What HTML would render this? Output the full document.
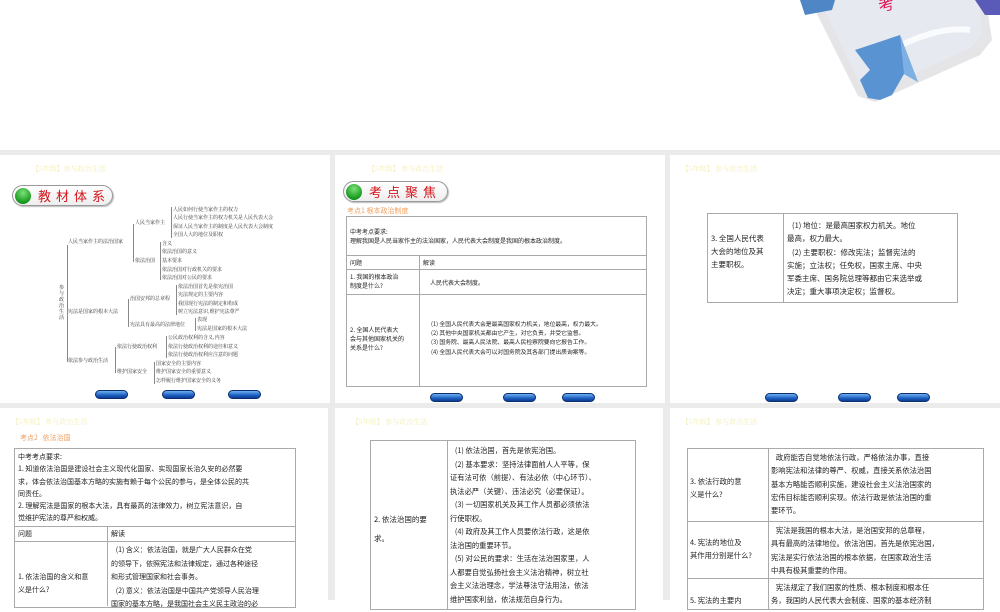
<!DOCTYPE html>
<html><head><meta charset="utf-8">
<style>
*{margin:0;padding:0;box-sizing:border-box}
body{width:1000px;height:600px;overflow:hidden;background:#fff;position:relative;font-family:"Liberation Serif","Noto Serif CJK SC","Noto Sans CJK SC",serif;color:#222}
.a{position:absolute;white-space:nowrap}
.bg{position:absolute;left:0;top:150px;width:1000px;height:450px;background:#ebebeb}
.s{position:absolute;background:#fff;overflow:hidden}
.hd{position:absolute;font-size:7px;color:#f3eeb8;white-space:nowrap}
.badge{position:absolute;height:21px;border:1px solid #999;border-radius:11px;background:linear-gradient(#fff,#eee);box-shadow:1px 1px 1px #bbb}
.badge .c{position:absolute;left:2px;top:2px;width:16px;height:16px;border-radius:50%;background:radial-gradient(circle at 50% 30%,#7de07a,#169a1e 70%,#0a6a10)}
.badge .t{position:absolute;left:25px;top:1px;font-size:13px;color:#d4141c;letter-spacing:5px;font-family:"Noto Sans CJK SC",sans-serif;line-height:18px;white-space:nowrap}
.btn{position:absolute;width:33px;height:9px;border-radius:5px;background:linear-gradient(#6fb0f0,#1c5fc0 60%,#0d3c90);border:1px solid #0b2e70}
.tb{position:absolute;border:1px solid #aaa}
.ln{position:absolute;background:#aaa}
.tx{position:absolute;font-family:"Noto Sans CJK SC",sans-serif;color:#222;white-space:nowrap}
.tr{font-size:5px;color:#333;position:absolute;white-space:nowrap;font-family:"Noto Serif CJK SC",serif;line-height:6px}
.br{position:absolute;border-left:1px solid #888}
.or{position:absolute;font-size:8px;color:#f0a060;white-space:nowrap;font-family:"Noto Sans CJK SC",sans-serif}
</style></head><body>

<!-- top decoration -->
<svg class="a" style="left:780px;top:0" width="220" height="110" viewBox="0 0 220 110">
 <path d="M20 -20 L200 -40 L212 40 L200 55 L95 102 L78 96 Z" fill="#d4d4d8" opacity=".6"/>
 <path d="M30 -20 L195 -40 L202 35 L190 48 L95 92 L82 88 Z" fill="#e6e9ef"/>
 <path d="M95 60 Q150 25 190 30" stroke="#fff" stroke-width="6" fill="none" opacity=".8"/>
 <path d="M75 50 L120 35 L138 82 L124 74 L112 95 L100 100 L88 98 L80 80 L90 70 Z" fill="#5a93d2"/>
 <path d="M120 35 L138 82 L124 74 Z" fill="#7fb0e4"/>
 <path d="M20 0 L55 0 L52 10 L25 15 Z" fill="#4f86c6"/>
 <path d="M195 0 L220 0 L220 15 L205 15 Z" fill="#5a5ab8"/>
 <text x="100" y="12" font-size="16" fill="#e0185a" font-family="Noto Sans CJK SC,sans-serif" transform="rotate(-15 100 12)">考</text>
</svg>

<div class="bg"></div>

<!-- Slide 1 -->
<div class="s" style="left:0;top:155px;width:330px;height:248px">
 <div class="hd" style="left:32px;top:9px">【5年级】参与政治生活</div>
 <div class="badge" style="left:12px;top:30px;width:101px"><div class="c"></div><div class="t">教材体系</div></div>
 <div class="btn" style="left:95px;top:235px"></div><div class="btn" style="left:162px;top:235px"></div><div class="btn" style="left:228px;top:235px"></div>
</div>
<div class="tr" style="left:59px;top:285px;width:6px;white-space:normal;line-height:6px">参与政治生活</div>
<div class="br" style="left:67px;top:245px;height:117px"></div>
<div class="tr" style="left:68px;top:239px">人民当家作主的法治国家</div>
<div class="tr" style="left:68px;top:309px">宪法是国家的根本大法</div>
<div class="tr" style="left:68px;top:358px">依法参与政治生活</div>
<div class="br" style="left:133px;top:224px;height:38px"></div>
<div class="tr" style="left:135px;top:220px">人民当家作主</div>
<div class="tr" style="left:135px;top:258px">依法治国</div>
<div class="br" style="left:171px;top:207px;height:31px"></div>
<div class="tr" style="left:173px;top:207px">人民如何行使当家作主的权力</div>
<div class="tr" style="left:173px;top:215px">人民行使当家作主的权力机关是人民代表大会</div>
<div class="tr" style="left:173px;top:224px">保证人民当家作主的制度是人民代表大会制度</div>
<div class="tr" style="left:173px;top:232px">全国人大的地位及职权</div>
<div class="br" style="left:160px;top:242px;height:38px"></div>
<div class="tr" style="left:162px;top:241px">含义</div>
<div class="tr" style="left:162px;top:249px">依法治国的意义</div>
<div class="tr" style="left:162px;top:258px">基本要求</div>
<div class="tr" style="left:162px;top:267px">依法治国对行政机关的要求</div>
<div class="tr" style="left:162px;top:275px">依法治国对公民的要求</div>
<div class="br" style="left:128px;top:299px;height:28px"></div>
<div class="tr" style="left:130px;top:296px">治国安邦的总章程</div>
<div class="tr" style="left:130px;top:322px">宪法具有最高的法律地位</div>
<div class="br" style="left:176px;top:285px;height:30px"></div>
<div class="tr" style="left:178px;top:284px">依法治国首先是依宪治国</div>
<div class="tr" style="left:178px;top:292px">宪法规定的主要内容</div>
<div class="tr" style="left:178px;top:301px">我国现行宪法的制定和构成</div>
<div class="tr" style="left:178px;top:309px">树立宪法意识,维护宪法尊严</div>
<div class="br" style="left:195px;top:318px;height:13px"></div>
<div class="tr" style="left:197px;top:317px">表现</div>
<div class="tr" style="left:197px;top:326px">宪法是国家的根本大法</div>
<div class="br" style="left:115px;top:347px;height:26px"></div>
<div class="tr" style="left:117px;top:344px">依法行使政治权利</div>
<div class="tr" style="left:117px;top:369px">维护国家安全</div>
<div class="br" style="left:166px;top:336px;height:22px"></div>
<div class="tr" style="left:168px;top:335px">公民政治权利的含义,内容</div>
<div class="tr" style="left:168px;top:344px">依法行使政治权利的途径和意义</div>
<div class="tr" style="left:168px;top:352px">依法行使政治权利应注意的问题</div>
<div class="br" style="left:154px;top:362px;height:22px"></div>
<div class="tr" style="left:156px;top:361px">国家安全的主要内容</div>
<div class="tr" style="left:156px;top:369px">维护国家安全的重要意义</div>
<div class="tr" style="left:156px;top:378px">怎样履行维护国家安全的义务</div>

<!-- Slide 2 -->
<div class="s" style="left:335px;top:155px;width:330px;height:248px">
 <div class="hd" style="left:33px;top:9px">【5年级】 参与政治生活</div>
 <div class="badge" style="left:8px;top:26px;width:105px"><div class="c"></div><div class="t">考点聚焦</div></div>
 <div class="btn" style="left:95px;top:238px"></div><div class="btn" style="left:168px;top:238px"></div><div class="btn" style="left:227px;top:238px"></div>
</div>
<div class="or" style="left:347px;top:206px;font-size:7px">考点1 根本政治制度</div>
<div class="tb" style="left:346px;top:216px;width:301px;height:171px"></div>
<div class="ln" style="left:346px;top:255px;width:301px;height:1px"></div>
<div class="ln" style="left:346px;top:269px;width:301px;height:1px"></div>
<div class="ln" style="left:346px;top:294px;width:301px;height:1px"></div>
<div class="ln" style="left:419px;top:255px;width:1px;height:132px"></div>
<div class="tx" style="left:350px;top:227px;font-size:6px;line-height:9px">中考考点要求:<br>理解我国是人民当家作主的法治国家，人民代表大会制度是我国的根本政治制度。</div>
<div class="tx" style="left:350px;top:258px;font-size:6px">问题</div>
<div class="tx" style="left:423px;top:258px;font-size:6px">解读</div>
<div class="tx" style="left:350px;top:272px;font-size:6px;line-height:9px">1. 我国的根本政治<br>制度是什么?</div>
<div class="tx" style="left:430px;top:278px;font-size:6px">人民代表大会制度。</div>
<div class="tx" style="left:350px;top:325px;font-size:6px;line-height:9px">2. 全国人民代表大<br>会与其他国家机关的<br>关系是什么?</div>
<div class="tx" style="left:431px;top:319px;font-size:5.8px;line-height:9.2px">(1) 全国人民代表大会是最高国家权力机关，地位最高，权力最大。<br>(2) 其他中央国家机关都由它产生，对它负责，并受它监督。<br>(3) 国务院、最高人民法院、最高人民检察院要向它报告工作。<br>(4) 全国人民代表大会可以对国务院及其各部门提出质询案等。</div>

<!-- Slide 3 -->
<div class="s" style="left:670px;top:155px;width:330px;height:248px">
 <div class="hd" style="left:12px;top:9px">【5年级】 参与政治生活</div>
 <div class="btn" style="left:95px;top:238px"></div><div class="btn" style="left:168px;top:238px"></div><div class="btn" style="left:227px;top:238px"></div>
</div>
<div class="tb" style="left:707px;top:213px;width:251px;height:90px"></div>
<div class="ln" style="left:783px;top:213px;width:1px;height:90px"></div>
<div class="tx" style="left:711px;top:232px;font-size:7.5px;line-height:13px">3. 全国人民代表<br>大会的地位及其<br>主要职权。</div>
<div class="tx" style="left:787px;top:219px;font-size:7.5px;line-height:13.3px">&nbsp;&nbsp;&nbsp;(1) 地位：是最高国家权力机关。地位<br>最高，权力最大。<br>&nbsp;&nbsp;&nbsp;(2) 主要职权：修改宪法；监督宪法的<br>实施；立法权；任免权，国家主席、中央<br>军委主席、国务院总理等都由它来选举或<br>决定；重大事项决定权；监督权。</div>

<!-- Slide 4 -->
<div class="s" style="left:0;top:408px;width:328px;height:192px">
 <div class="hd" style="left:12px;top:9px">【5年级】 参与政治生活</div>
</div>
<div class="or" style="left:20px;top:433px;font-size:7px">考点2&nbsp;&nbsp;&nbsp;依法治国</div>
<div class="tb" style="left:14px;top:448px;width:282px;height:160px"></div>
<div class="ln" style="left:14px;top:526px;width:282px;height:1px"></div>
<div class="ln" style="left:14px;top:541px;width:282px;height:1px"></div>
<div class="ln" style="left:107px;top:526px;width:1px;height:80px"></div>
<div class="tx" style="left:18px;top:451px;font-size:7px;line-height:12.3px">中考考点要求:<br>1. 知道依法治国是建设社会主义现代化国家、实现国家长治久安的必然要<br>求，体会依法治国基本方略的实施有赖于每个公民的参与，是全体公民的共<br>同责任。<br>2. 理解宪法是国家的根本大法，具有最高的法律效力，树立宪法意识，自<br>觉维护宪法的尊严和权威。</div>
<div class="tx" style="left:18px;top:529px;font-size:7px">问题</div>
<div class="tx" style="left:111px;top:529px;font-size:7px">解读</div>
<div class="tx" style="left:18px;top:571px;font-size:7px;line-height:13px">1. 依法治国的含义和意<br>义是什么?</div>
<div class="tx" style="left:111px;top:544px;font-size:7px;line-height:13.5px">&nbsp;&nbsp;&nbsp;(1) 含义：依法治国，就是广大人民群众在党<br>的领导下，依照宪法和法律规定，通过各种途径<br>和形式管理国家和社会事务。<br>&nbsp;&nbsp;&nbsp;(2) 意义：依法治国是中国共产党领导人民治理<br>国家的基本方略，是我国社会主义民主政治的必</div>

<!-- Slide 5 -->
<div class="s" style="left:335px;top:408px;width:328px;height:192px">
 <div class="hd" style="left:17px;top:9px">【5年级】 参与政治生活</div>
</div>
<div class="tb" style="left:370px;top:440px;width:266px;height:170px"></div>
<div class="ln" style="left:447px;top:440px;width:1px;height:170px"></div>
<div class="tx" style="left:374px;top:510px;font-size:7.5px;line-height:19px">2. 依法治国的要<br>求。</div>
<div class="tx" style="left:450px;top:445px;font-size:7.3px;line-height:13.5px">&nbsp;&nbsp;&nbsp;(1) 依法治国，首先是依宪治国。<br>&nbsp;&nbsp;&nbsp;(2) 基本要求：坚持法律面前人人平等，保<br>证有法可依（前提）、有法必依（中心环节）、<br>执法必严（关键）、违法必究（必要保证）。<br>&nbsp;&nbsp;&nbsp;(3) 一切国家机关及其工作人员都必须依法<br>行使职权。<br>&nbsp;&nbsp;&nbsp;(4) 政府及其工作人员要依法行政，这是依<br>法治国的重要环节。<br>&nbsp;&nbsp;&nbsp;(5) 对公民的要求：生活在法治国家里，人<br>人都要自觉弘扬社会主义法治精神，树立社<br>会主义法治理念，学法尊法守法用法，依法<br>维护国家利益，依法规范自身行为。</div>

<!-- Slide 6 -->
<div class="s" style="left:670px;top:408px;width:330px;height:192px">
 <div class="hd" style="left:12px;top:9px">【5年级】 参与政治生活</div>
</div>
<div class="tb" style="left:687px;top:448px;width:297px;height:162px"></div>
<div class="ln" style="left:687px;top:521px;width:297px;height:1px"></div>
<div class="ln" style="left:687px;top:578px;width:297px;height:1px"></div>
<div class="ln" style="left:768px;top:448px;width:1px;height:162px"></div>
<div class="tx" style="left:690px;top:476px;font-size:7.3px;line-height:13.3px">3. 依法行政的意<br>义是什么?</div>
<div class="tx" style="left:771px;top:452px;font-size:7.3px;line-height:13.3px">&nbsp;&nbsp;&nbsp;政府能否自觉地依法行政，严格依法办事，直接<br>影响宪法和法律的尊严、权威，直接关系依法治国<br>基本方略能否顺利实施，建设社会主义法治国家的<br>宏伟目标能否顺利实现。依法行政是依法治国的重<br>要环节。</div>
<div class="tx" style="left:690px;top:537px;font-size:7.3px;line-height:13.3px">4. 宪法的地位及<br>其作用分别是什么?</div>
<div class="tx" style="left:771px;top:525px;font-size:7.3px;line-height:13.3px">&nbsp;&nbsp;&nbsp;宪法是我国的根本大法，是治国安邦的总章程，<br>具有最高的法律地位。依法治国，首先是依宪治国，<br>宪法是实行依法治国的根本依据，在国家政治生活<br>中具有极其重要的作用。</div>
<div class="tx" style="left:690px;top:596px;font-size:7.3px">5. 宪法的主要内</div>
<div class="tx" style="left:771px;top:582px;font-size:7.3px;line-height:13.3px">&nbsp;&nbsp;&nbsp;宪法规定了我们国家的性质、根本制度和根本任<br>务，我国的人民代表大会制度、国家的基本经济制</div>

</body></html>
